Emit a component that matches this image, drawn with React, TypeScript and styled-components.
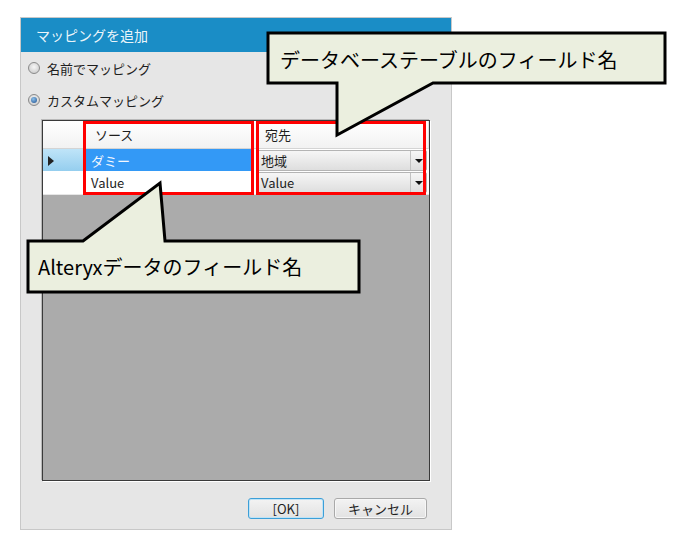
import React from "react";
import styled, { createGlobalStyle } from "styled-components";

const GlobalStyle = createGlobalStyle`
  body {
    margin: 0;
    background: #ffffff;
    font-family: "Noto Sans CJK JP", "Noto Sans", sans-serif;
  }
`;

const Page = styled.div`
  position: relative;
  width: 699px;
  height: 539px;
  padding: 17px 0 0 20px;
  box-sizing: border-box;
  overflow: hidden;
`;

const Dialog = styled.div`
  width: 432px;
  height: 513px;
  box-sizing: border-box;
  background: #e6e6e6;
  border: 1px solid #c8c8c8;
  display: flex;
  flex-direction: column;
`;

const TitleBar = styled.div`
  height: 34px;
  background: #1a8dc6;
  color: rgba(255, 255, 255, 0.93);
  font-size: 14px;
  display: flex;
  align-items: center;
  justify-content: space-between;
  padding: 0 14px 0 15px;
`;

const Close = styled.span`
  font-size: 13px;
  line-height: 14px;
  color: #ffffff;
  margin-top: 4px;
`;

const Body = styled.div`
  flex: 1;
  display: flex;
  flex-direction: column;
  padding-top: 6px;
`;

const RadioRow = styled.label<{ $gap?: number }>`
  height: 20px;
  display: flex;
  align-items: center;
  gap: 7px;
  padding-left: 7px;
  margin-top: ${({ $gap }) => $gap ?? 0}px;
  font-size: 13px;
  color: #1e1e1e;
`;

const Radio = styled.span<{ $checked?: boolean }>`
  width: 12px;
  height: 12px;
  border-radius: 50%;
  box-sizing: border-box;
  border: 1px solid #8a8a8a;
  background: radial-gradient(circle at 50% 40%, #f6f6f6, #c4c4c4);
  display: flex;
  align-items: center;
  justify-content: center;
  &::after {
    content: "";
    display: ${({ $checked }) => ($checked ? "block" : "none")};
    width: 6px;
    height: 6px;
    border-radius: 50%;
    background: radial-gradient(circle at 40% 35%, #8cc0ea, #1d4f8f);
  }
`;

const GridFrame = styled.div`
  margin: 10px 21px 0;
  height: 361px;
  box-sizing: border-box;
  border: 1px solid #3a3a3a;
  box-shadow: 1px 1px 0 #ffffff, -1px -1px 0 #b9b9b9;
  background: #ababab;
`;

const GridRow = styled.div<{ $height: number }>`
  display: grid;
  grid-template-columns: 41px 170px 1fr;
  height: ${({ $height }) => $height}px;
  background: #ffffff;
`;

const HeaderCell = styled.div`
  display: flex;
  align-items: center;
  padding-left: 11px;
  font-size: 13px;
  color: #1e1e1e;
  background: linear-gradient(#ffffff, #f2f2f2);
  border-right: 1px solid #e0e0e0;
  border-bottom: 1px solid #d4d4d4;
`;

const RowHeader = styled.div<{ $current?: boolean }>`
  display: flex;
  align-items: center;
  padding-left: 5px;
  background: ${({ $current }) =>
    $current ? "linear-gradient(#bfe4f8, #93cdee)" : "#ffffff"};
  border-right: 1px solid #dcdcdc;
  border-bottom: 1px solid #e6e6e6;
`;

const Pointer = styled.span`
  width: 0;
  height: 0;
  border-top: 5px solid transparent;
  border-bottom: 5px solid transparent;
  border-left: 6px solid #222222;
`;

const Cell = styled.div<{ $selected?: boolean }>`
  display: flex;
  align-items: center;
  padding-left: 7px;
  font-size: 13px;
  color: ${({ $selected }) => ($selected ? "#f4f8ff" : "#1e1e1e")};
  background: ${({ $selected }) => ($selected ? "#3399f6" : "#ffffff")};
  border-right: 1px solid #e0e0e0;
  border-bottom: 1px solid #e6e6e6;
`;

const ComboCell = styled.div`
  padding: 1px 2px 1px 2px;
  background: #ffffff;
  border-bottom: 1px solid #e6e6e6;
`;

const Combo = styled.div`
  height: 100%;
  box-sizing: border-box;
  display: flex;
  border: 1px solid #b4b4b4;
  border-radius: 2px;
  background: linear-gradient(#f6f6f6, #dedede);
  font-size: 13px;
  color: #1e1e1e;
`;

const ComboText = styled.span`
  flex: 1;
  display: flex;
  align-items: center;
  padding-left: 4px;
`;

const ComboButton = styled.span`
  width: 15px;
  display: flex;
  align-items: center;
  justify-content: center;
  border-left: 1px solid #c2c2c2;
  &::after {
    content: "";
    border-left: 4px solid transparent;
    border-right: 4px solid transparent;
    border-top: 4px solid #111111;
  }
`;

const Footer = styled.div`
  display: flex;
  justify-content: flex-end;
  gap: 10px;
  padding-right: 24px;
  margin-top: 17px;
`;

const Button = styled.button<{ $default?: boolean; $width: number }>`
  width: ${({ $width }) => $width}px;
  height: 21px;
  padding: 0;
  border-radius: 3px;
  border: 1px solid ${({ $default }) => ($default ? "#3c9fd8" : "#a9a9a9")};
  box-shadow: ${({ $default }) =>
    $default ? "inset 0 0 0 1px #bfe3f6" : "inset 0 0 0 1px #f7f7f7"};
  background: linear-gradient(#f3f3f3, #e2e2e2);
  font-family: "Noto Sans CJK JP", "Noto Sans", sans-serif;
  font-size: 13px;
  color: #1e1e1e;
`;

const Overlay = styled.svg`
  position: absolute;
  left: 0;
  top: 0;
  pointer-events: none;
`;

const Mark = styled.div<{ $left: number; $width: number }>`
  position: absolute;
  top: 121px;
  left: ${({ $left }) => $left}px;
  width: ${({ $width }) => $width}px;
  height: 74px;
  box-sizing: border-box;
  border: 3px solid #ff0000;
`;

const Label = styled.div<{ $left: number; $top: number }>`
  position: absolute;
  left: ${({ $left }) => $left}px;
  top: ${({ $top }) => $top}px;
  font-size: 20px;
  line-height: 24px;
  color: #000000;
  white-space: nowrap;
`;

export default function App() {
  return (
    <Page>
      <GlobalStyle />
      <Dialog>
        <TitleBar>
          <span>マッピングを追加</span>
          <Close>×</Close>
        </TitleBar>
        <Body>
          <RadioRow>
            <Radio />
            名前でマッピング
          </RadioRow>
          <RadioRow $gap={12}>
            <Radio $checked />
            カスタムマッピング
          </RadioRow>
          <GridFrame>
            <GridRow $height={28}>
              <HeaderCell />
              <HeaderCell>ソース</HeaderCell>
              <HeaderCell>宛先</HeaderCell>
            </GridRow>
            <GridRow $height={22}>
              <RowHeader $current>
                <Pointer />
              </RowHeader>
              <Cell $selected>ダミー</Cell>
              <ComboCell>
                <Combo>
                  <ComboText>地域</ComboText>
                  <ComboButton />
                </Combo>
              </ComboCell>
            </GridRow>
            <GridRow $height={22}>
              <RowHeader />
              <Cell>Value</Cell>
              <ComboCell>
                <Combo>
                  <ComboText>Value</ComboText>
                  <ComboButton />
                </Combo>
              </ComboCell>
            </GridRow>
          </GridFrame>
          <Footer>
            <Button $default $width={76}>[OK]</Button>
            <Button $width={93}>キャンセル</Button>
          </Footer>
        </Body>
      </Dialog>

      <Mark $left={83} $width={171} />
      <Mark $left={256} $width={170} />

      <Overlay width="699" height="539" viewBox="0 0 699 539">
        <polygon
          points="268,33 665,33 665,83 433,83 337,135 337,83 268,83"
          fill="#ebefdf"
          stroke="#000000"
          strokeWidth="3"
          strokeLinejoin="miter"
        />
        <polygon
          points="28,241 83,241 160,183 165,241 359,241 359,292 28,292"
          fill="#ebefdf"
          stroke="#000000"
          strokeWidth="3"
          strokeLinejoin="miter"
        />
      </Overlay>
      <Label $left={280} $top={48}>データベーステーブルのフィールド名</Label>
      <Label $left={38} $top={255}>Alteryxデータのフィールド名</Label>
    </Page>
  );
}
